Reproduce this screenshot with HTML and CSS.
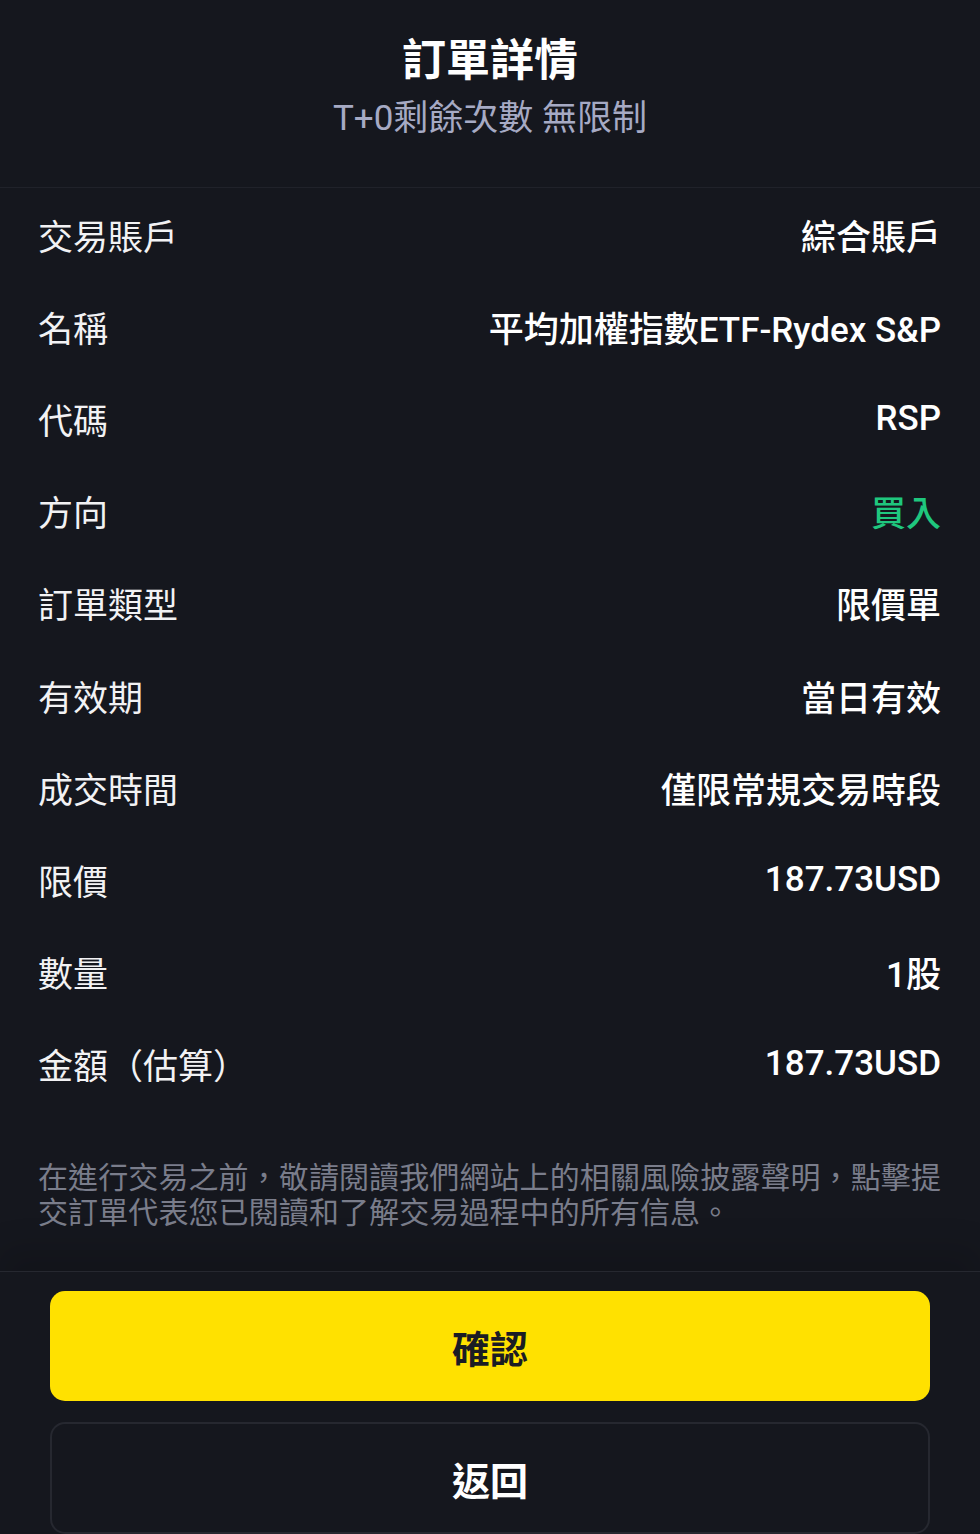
FILE: index.html
```html
<!DOCTYPE html>
<html lang="zh-Hant">
<head>
<meta charset="utf-8">
<title>訂單詳情</title>
<link rel="stylesheet" href="styles.css">
</head>
<body>
<div class="page">
  <header class="head">
    <h1 class="title">訂單詳情</h1>
    <div class="subtitle">T+0剩餘次數 無限制</div>
  </header>
  <section class="rows">
    <div class="row"><span class="label">交易賬戶</span><span class="value">綜合賬戶</span></div>
    <div class="row"><span class="label">名稱</span><span class="value">平均加權指數ETF-Rydex S&amp;P</span></div>
    <div class="row"><span class="label">代碼</span><span class="value">RSP</span></div>
    <div class="row"><span class="label">方向</span><span class="value buy">買入</span></div>
    <div class="row"><span class="label">訂單類型</span><span class="value">限價單</span></div>
    <div class="row"><span class="label">有效期</span><span class="value">當日有效</span></div>
    <div class="row"><span class="label">成交時間</span><span class="value">僅限常規交易時段</span></div>
    <div class="row"><span class="label">限價</span><span class="value">187.73USD</span></div>
    <div class="row"><span class="label">數量</span><span class="value">1股</span></div>
    <div class="row"><span class="label">金額（估算）</span><span class="value">187.73USD</span></div>
  </section>
  <p class="note">在進行交易之前，敬請閱讀我們網站上的相關風險披露聲明，點擊提交訂單代表您已閱讀和了解交易過程中的所有信息。</p>
  <footer class="foot">
    <button class="btn btn-confirm">確認</button>
    <button class="btn btn-back">返回</button>
  </footer>
</div>
</body>
</html>
```

FILE: styles.css
```css
html, body {
  margin: 0;
  padding: 0;
  background: #15171e;
}
body {
  font-family: Roboto, "Noto Sans CJK TC", "Noto Sans", sans-serif;
  color: #ffffff;
}
.page {
  width: 980px;
  height: 1534px;
  overflow: hidden;
  display: flex;
  flex-direction: column;
}
.head {
  height: 193px;
  box-sizing: border-box;
  border-bottom: 1px solid #20222a;
  display: flex;
  flex-direction: column;
  align-items: center;
  padding-top: 31px;
}
.title {
  margin: 0;
  font-size: 44px;
  line-height: 60px;
  font-weight: 700;
  color: #ffffff;
}
.subtitle {
  margin-top: 0;
  font-size: 35px;
  line-height: 56px;
  color: #a6aac4;
}
.rows {
  display: flex;
  flex-direction: column;
  margin-top: 0;
  padding: 0 39px 0 38px;
}
.row {
  height: 92.2px;
  display: flex;
  align-items: center;
  justify-content: space-between;
  font-size: 35px;
}
.label {
  color: #f2f2f4;
  font-weight: 400;
}
.value {
  color: #ffffff;
  font-weight: 500;
}
.value.buy {
  color: #1fc77e;
}
.note {
  margin: 0;
  padding: 50px 38px 41px 38px;
  font-size: 30px;
  line-height: 35px;
  color: #7a7d8b;
  letter-spacing: 0.1px;
}
.foot {
  flex: 1;
  border-top: 1px solid #262830;
  box-shadow: 0 -24px 30px rgba(0, 0, 0, 0.12);
  display: flex;
  flex-direction: column;
  gap: 21px;
  padding: 19px 50px 0 50px;
}
.btn {
  font-family: Roboto, "Noto Sans CJK TC", sans-serif;
  font-size: 38px;
  font-weight: 700;
  height: 110px;
  border-radius: 15px;
  cursor: pointer;
}
.btn-confirm {
  background: #ffe100;
  color: #1b1c24;
  border: none;
}
.btn-back {
  background: transparent;
  color: #ffffff;
  border: 2px solid #262830;
  height: 112px;
}
```
